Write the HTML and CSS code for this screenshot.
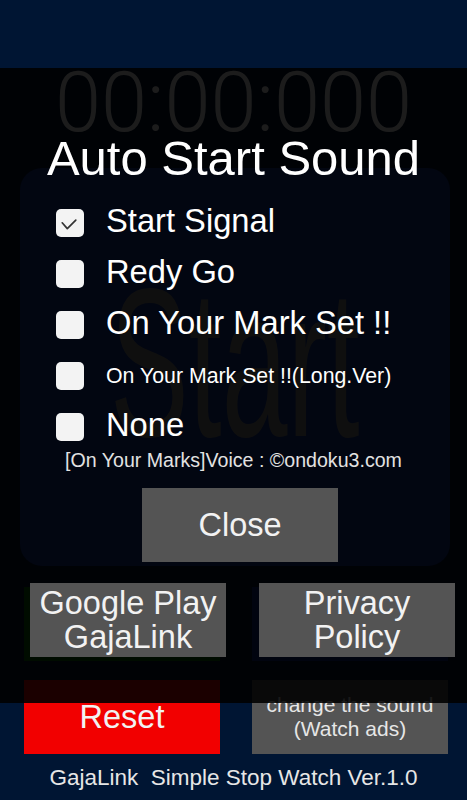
FILE: index.html
```html
<!DOCTYPE html>
<html lang="en">
<head>
  <meta charset="UTF-8">
  <meta name="viewport" content="width=device-width, initial-scale=1.0">
  <title>Simple Stop Watch</title>
  <link rel="stylesheet" href="styles.css">
</head>
<body>
  <div class="screen">
    <div class="timer">00:00:000</div>

    <div class="start-pad">
      <span class="start-label">Start</span>
    </div>

    <div class="btn-row row-top">
      <div class="btn btn-green"></div>
      <div class="btn btn-blue"></div>
    </div>

    <div class="btn-row row-bottom">
      <div class="btn btn-red">Reset</div>
      <div class="btn btn-gray btn-small">change the sound<br>(Watch ads)</div>
    </div>

    <p class="footer">GajaLink&nbsp; Simple Stop Watch Ver.1.0</p>

    <!-- sound select popup -->
    <div class="dim">
      <h2 class="dialog-title">Auto Start Sound</h2>

      <ul class="sound-list">
        <li class="sound-item">
          <span class="check">
            <svg width="28" height="28" viewBox="0 0 28 28"><path d="M6.2 13.8 L11.3 19.6 L19.8 11.2" fill="none" stroke="#333" stroke-width="1.7" stroke-linecap="round" stroke-linejoin="round"/></svg>
          </span>
          <span class="sound-name">Start Signal</span>
        </li>
        <li class="sound-item">
          <span class="check"></span>
          <span class="sound-name">Redy Go</span>
        </li>
        <li class="sound-item">
          <span class="check"></span>
          <span class="sound-name">On Your Mark Set !!</span>
        </li>
        <li class="sound-item">
          <span class="check"></span>
          <span class="sound-name sound-name-small">On Your Mark Set !!(Long.Ver)</span>
        </li>
        <li class="sound-item">
          <span class="check"></span>
          <span class="sound-name">None</span>
        </li>
      </ul>

      <p class="credit">[On Your Marks]Voice : &copy;ondoku3.com</p>

      <div class="btn btn-gray btn-close">Close</div>

      <div class="btn-row dialog-links">
        <div class="btn btn-gray btn-two">Google Play<br>GajaLink</div>
        <div class="btn btn-gray btn-two">Privacy<br>Policy</div>
      </div>
    </div>
  </div>
</body>
</html>
```

FILE: styles.css
```css
body {
  margin: 0;
  padding: 0;
  background-color: #001533;
  font-family: 'Liberation Sans', Arial, sans-serif;
  color: #fff;
}
.screen {
  position: relative;
  width: 467px;
  height: 800px;
  overflow: hidden;
  padding-top: 68px;
  box-sizing: border-box;
}
.timer {
  font-family: Roboto, sans-serif;
  font-weight: 300;
  font-size: 83px;
  line-height: 70px;
  height: 70px;
  text-align: center;
  color: #fff;
}
.start-pad {
  margin: 30px 17px 0 20px;
  height: 398px;
  border-radius: 22px;
  background-color: #163698;
  display: flex;
  align-items: center;
  justify-content: center;
  overflow: hidden;
}
.start-label {
  display: inline-block;
  font-size: 211px;
  line-height: 211px;
  color: #8c8c8c;
  transform: scaleX(0.56);
  margin-top: -8px;
}
.btn-row {
  display: flex;
  gap: 32px;
  padding-left: 24px;
}
.row-top {
  margin-top: 21px;
}
.row-bottom {
  margin-top: 19px;
}
.btn {
  width: 196px;
  height: 74px;
  display: flex;
  align-items: center;
  justify-content: center;
  text-align: center;
  font-size: 32.5px;
  line-height: 34px;
  color: #f2f2f2;
}
.btn-green {
  background-color: #006a00;
}
.btn-blue {
  background-color: #0f2a88;
}
.btn-red {
  background-color: #f20000;
}
.btn-gray {
  background-color: #545454;
}
.btn-small {
  font-size: 21px;
  line-height: 24px;
  color: #e6e6e6;
}
.footer {
  margin: 12px 0 0;
  font-size: 22.5px;
  line-height: 24px;
  text-align: center;
  color: #e6e6e6;
  white-space: pre;
}
.dim {
  position: absolute;
  top: 68px;
  left: 0;
  right: 0;
  height: 635px;
  background-color: rgba(0, 0, 0, 0.89);
  padding-top: 62px;
  box-sizing: border-box;
}
.dialog-title {
  margin: 0;
  font-size: 49px;
  font-weight: normal;
  line-height: 56px;
  text-align: center;
  color: #fff;
}
.sound-list {
  list-style: none;
  margin: 11px 0 0;
  padding: 0 0 0 56px;
}
.sound-item {
  height: 51px;
  display: flex;
  align-items: center;
  gap: 22px;
}
.check {
  width: 28px;
  height: 28px;
  border-radius: 5px;
  background-color: #f3f3f3;
  flex-shrink: 0;
}
.check svg {
  display: block;
}
.sound-name {
  font-size: 32.7px;
  line-height: 36px;
  margin-top: -3px;
  color: #fff;
}
.sound-name-small {
  font-size: 21.3px;
  line-height: 24px;
  margin-top: 0;
}
.credit {
  margin: -3px 0 0;
  font-size: 19.6px;
  line-height: 22px;
  text-align: center;
  color: #e2e2e2;
}
.btn-close {
  margin: 17px 0 0 142px;
}
.dialog-links {
  margin-top: 21px;
  padding-left: 30px;
  gap: 33px;
}
```
